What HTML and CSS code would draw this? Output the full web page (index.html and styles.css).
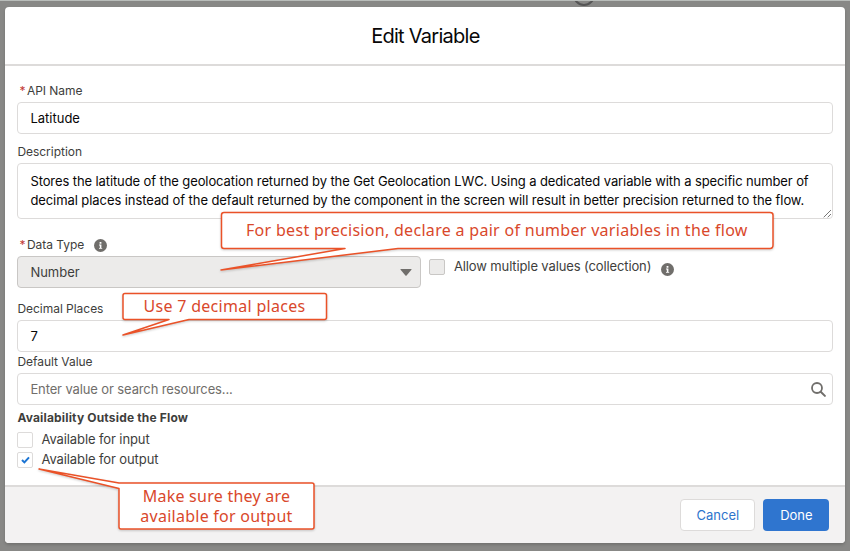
FILE: index.html
```html
<!DOCTYPE html>
<html lang="en">
<head>
<meta charset="utf-8">
<title>Edit Variable</title>
<link rel="stylesheet" href="styles.css">
</head>
<body>
<svg class="backdrop-icon" width="24" height="8" viewBox="0 0 24 8"><circle cx="12" cy="-5" r="10" fill="none" stroke="#555" stroke-width="2"/></svg>
<section class="modal">
  <header class="modal-header"><h1>Edit Variable</h1></header>
  <main class="modal-body">
    <div class="field">
      <div class="label required"><span class="star">*</span><span>API Name</span></div>
      <div class="input"><span>Latitude</span></div>
    </div>
    <div class="field description">
      <div class="label"><span>Description</span></div>
      <div class="input textarea">
        <span class="line-one">Stores the latitude of the geolocation returned by the Get Geolocation LWC. Using a dedicated variable with a specific number of</span><br>
        <span class="line-two">decimal places instead of the default returned by the component in the screen will result in better precision returned to the flow.</span>
        <svg class="grip" width="9" height="9" viewBox="0 0 9 9"><path d="M.7 8.3 8 1M4.7 8.3 8 5" stroke="#777" fill="none"/></svg>
      </div>
    </div>
    <div class="field type-row">
      <div class="type">
        <div class="label required"><span class="star">*</span><span>Data Type</span>
          <svg class="info" width="13" height="13" viewBox="0 0 13 13"><circle cx="6.5" cy="6.5" r="6.5" fill="#706e6b"/><path d="M5.6 3h1.8v1.7H5.6zM5 5.6h2.4v3.3h.8v.9H5v-.9h.8V6.5H5z" fill="#fff"/></svg>
        </div>
        <div class="input select"><span>Number</span>
          <svg width="12" height="7" viewBox="0 0 12 7"><path d="M1 0h10q1 0 .4.8L6.6 6.500q-.6.6-1.200 0L.6.8Q0 0 1 0z" fill="#706e6b"/></svg>
        </div>
      </div>
      <div class="multiple">
        <span class="checkbox disabled"></span><span class="tight">Allow multiple values (collection)</span>
        <svg class="info" width="13" height="13" viewBox="0 0 13 13"><circle cx="6.5" cy="6.5" r="6.5" fill="#706e6b"/><path d="M5.6 3h1.8v1.7H5.6zM5 5.6h2.4v3.3h.8v.9H5v-.9h.8V6.5H5z" fill="#fff"/></svg>
      </div>
    </div>
    <div class="field decimals">
      <div class="label"><span>Decimal Places</span></div>
      <div class="input"><span>7</span></div>
    </div>
    <div class="field default">
      <div class="label"><span>Default Value</span></div>
      <div class="input search"><span class="tight">Enter value or search resources...</span>
        <svg width="15" height="15" viewBox="0 0 15 15" fill="none" stroke="#706e6b"><circle cx="6" cy="6" r="5" stroke-width="1.8"/><path d="m9.7 9.7 4.2 4.2" stroke-width="2" stroke-linecap="round"/></svg>
      </div>
    </div>
    <div class="availability">
      <h2>Availability Outside the Flow</h2>
      <div class="check-row"><span class="checkbox"></span><span class="check-text">Available for input</span></div>
      <div class="check-row"><span class="checkbox"><svg width="9" height="8" viewBox="0 0 9 8"><path d="m1 4 2.4 2.4L8 1.3" fill="none" stroke="#1b74d3" stroke-width="2"/></svg></span><span class="check-text">Available for output</span></div>
    </div>
  </main>
  <footer class="modal-footer">
    <div class="button cancel">Cancel</div>
    <div class="button done">Done</div>
  </footer>
</section>

<svg class="callouts" width="850" height="551" viewBox="0 0 850 551" fill="#fff" stroke="#ea5228" stroke-width="1.5" stroke-linejoin="round">
  <path d="M224 212.500H770Q773 212.500 773 215V245Q773 248.500 770 248.500H398L221 270 345 248.500H224Q221.500 248.500 221.500 246V215Q221.500 212.500 224 212.500z"/>
  <path d="M125 293.500H324.500Q326.500 293.500 326.500 295.500V317.500Q326.500 319.500 324.500 319.500H189L123 335 169 319.500H125Q123 319.500 123 317.500V295.500Q123 293.500 125 293.500z"/>
  <path d="M39 469 119 483H312Q314 483 314 485V527Q314 529 312 529H121Q119 529 119 527V488.500z"/>
</svg>
<p class="callout precision">For best precision, declare a pair of number variables in the flow</p>
<p class="callout places">Use 7 decimal places</p>
<p class="callout output"><span>Make sure they are</span><br><span>available for output</span></p>
</body>
</html>
```

FILE: styles.css
```css
* { box-sizing: border-box; }
body {
  margin: 0;
  width: 850px;
  height: 551px;
  overflow: hidden;
  position: relative;
  padding: 6px 4.6px 0 5.4px;
  background: #888886;
  border-top: 1px solid #b9bdba;
  font: 13px/19px Inter, "Liberation Sans", sans-serif;
  color: #3e3e3c;
}
svg { display: block; flex: none; }
span { white-space: nowrap; }
.backdrop-icon { position: absolute; left: 572px; top: -1px; }
.modal {
  display: flex;
  flex-direction: column;
  height: 536px;
  background: #fff;
  border-radius: 4px;
  overflow: hidden;
  box-shadow: 0 2px 3px rgba(0, 0, 0, .16);
}
.modal-header {
  height: 59px;
  padding-top: 2px;
  border-bottom: 2px solid #dddbda;
  display: flex;
  align-items: center;
  justify-content: center;
}
h1 { margin: 0; font-size: 20px; font-weight: 400; line-height: 25px; color: #080707; letter-spacing: -.73px; }
.modal-body { flex: 1; padding: 16px 12px 0; }
.label { height: 20px; line-height: 18px; font-size: 12px; letter-spacing: -.03px; display: flex; align-items: center; padding-bottom: 2px; }
.star { color: #c23934; margin: 0 2.5px 0 2px; width: 5px; font-size: 12px; }
.input {
  height: 32px;
  border: 1px solid #dddbda;
  border-radius: 4px;
  background: #fff;
  padding: 0 12px;
  display: flex;
  align-items: center;
  color: #080707;
}
.description { margin-top: 9px; }
.textarea { display: block; height: 56px; padding-top: 8px; position: relative; }
.line-one { letter-spacing: -.1px; }
.line-two { letter-spacing: -.078px; }
.tight { letter-spacing: -.12px; }
.grip { position: absolute; right: 0; bottom: 0; }
.type-row { margin-top: 17px; display: flex; gap: 8px; }
.type { width: 404px; }
.type .info { margin-left: 9.5px; }
.select { background: #ecebea; border-color: #c9c7c5; color: #3e3e3c; justify-content: space-between; padding-right: 8px; }
.multiple { display: flex; align-items: center; height: 20px; margin-top: 21px; }
.multiple .checkbox { margin-right: 8.5px; }
.multiple .tight { padding-bottom: 1px; }
.multiple .info { margin: 4px 0 0 10px; }
.checkbox { width: 16px; height: 16px; border: 1px solid #dddbda; border-radius: 2px; background: #fff; display: flex; align-items: center; justify-content: center; }
.checkbox.disabled { background: #ecebea; border-color: #c9c7c5; }
.decimals { margin-top: 12px; }
.default { margin-top: 1px; }
.search { justify-content: space-between; color: #706e6b; padding-right: 6px; }
h2 { margin: 4px 0 3px; font-size: 12px; line-height: 18px; font-weight: 700; letter-spacing: .17px; }
.check-row { display: flex; align-items: center; height: 20px; gap: 8px; }
.check-text { letter-spacing: -.1px; padding-bottom: 1px; }
.modal-footer {
  height: 58px;
  border-top: 2px solid #dddbda;
  background: #f3f2f2;
  display: flex;
  justify-content: flex-end;
  align-items: center;
  gap: 8px;
  padding-right: 16px;
}
.button { height: 32px; line-height: 32px; border-radius: 4px; text-align: center; }
.cancel { width: 75px; border: 1px solid #dddbda; background: #fff; color: #2d74cc; line-height: 31px; }
.done { width: 66px; background: #2f75cf; color: #fff; }
.callouts { position: absolute; left: 0; top: -1px; filter: drop-shadow(0 1px 1px rgba(0, 0, 0, .2)); }
.callout { position: absolute; margin: 0; color: #d9482b; font: 16px/20px "Noto Sans", sans-serif; white-space: nowrap; }
.precision { left: 246px; top: 219px; letter-spacing: .3px; }
.places { left: 143.5px; top: 295px; letter-spacing: .3px; }
.output { left: 119px; top: 485px; width: 195px; text-align: center; letter-spacing: .25px; }
```
